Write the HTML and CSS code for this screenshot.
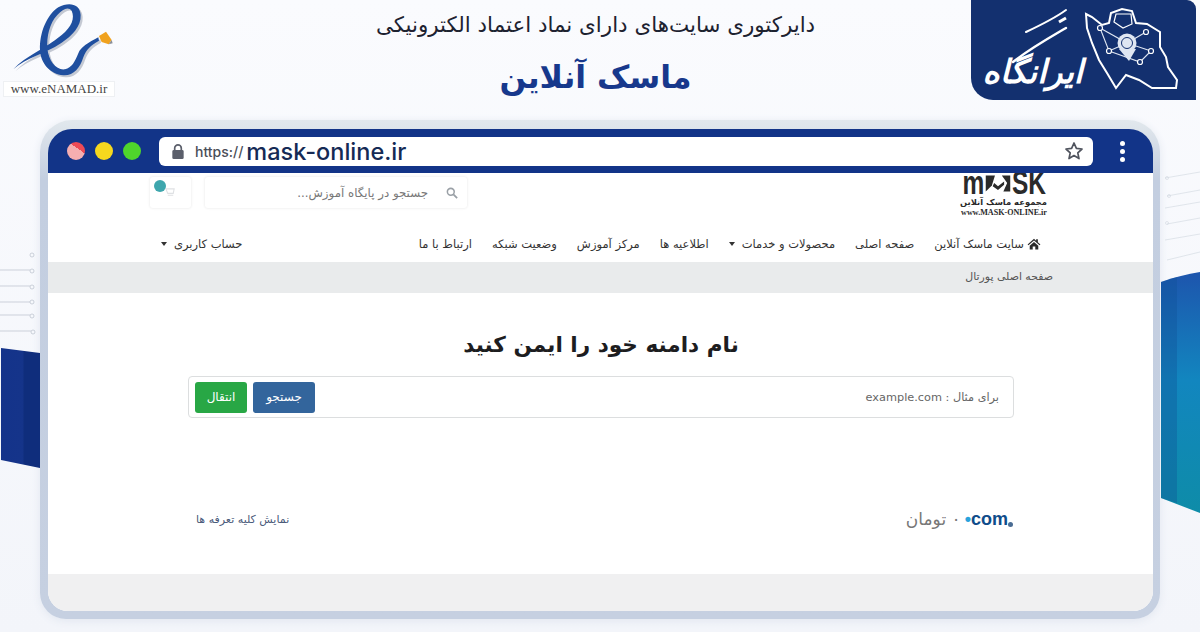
FILE: index.html
```html
<!DOCTYPE html>
<html lang="fa">
<head>
	<meta charset="utf-8">
	<title>ماسک آنلاین</title>
	<link rel="stylesheet" href="styles.css">
</head>
<body>
	<!-- side decoration -->
	<svg class="deco deco-left" viewBox="0 0 40 400" width="40" height="400">
		<defs>
			<linearGradient id="leftBlue" x1="0" x2="1" y1="0" y2="0">
				<stop offset="0" stop-color="#14338a"/>
				<stop offset="0.55" stop-color="#15348a"/>
				<stop offset="0.6" stop-color="#0f2d7c"/>
				<stop offset="1" stop-color="#0f2d7c"/>
			</linearGradient>
		</defs>
		<g fill="none" stroke="#b9c0cb" stroke-width="0.7">
			<path d="M0 20H30M0 36H30M0 52H30M0 65H30M0 81H31"/>
			<circle cx="32" cy="5" r="2"/><circle cx="32" cy="21" r="2"/><circle cx="32" cy="37" r="2"/>
			<circle cx="32" cy="52" r="2"/><circle cx="32" cy="66" r="2"/><circle cx="33" cy="82" r="2"/>
		</g>
		<path d="M1 98 L40 103 V218 L1 210Z" fill="url(#leftBlue)"/>
	</svg>
	<svg class="deco deco-right" viewBox="0 0 39 360" width="39" height="360">
		<defs>
			<linearGradient id="rightBlue" x1="0" x2="0" y1="0" y2="1">
				<stop offset="0" stop-color="#1d55ad"/>
				<stop offset="0.45" stop-color="#1286bf"/>
				<stop offset="1" stop-color="#0e8ca8"/>
			</linearGradient>
		</defs>
		<g fill="none" stroke="#d0d6df" stroke-width="0.6">
			<path d="M4 8L39 2M6 26L39 20M4 38L39 32M6 54L39 48M4 70L39 64M6 90L39 82"/>
			<circle cx="6" cy="8" r="1.5"/><circle cx="8" cy="26" r="1.5"/><circle cx="6" cy="53" r="1.5"/>
		</g>
		<path d="M0 112 C14 107 26 104 39 102 V343 L0 328Z" fill="url(#rightBlue)"/>
		<path d="M0 112 L16 107 V333 L0 328Z" fill="#0d4f96" opacity="0.35"/>
	</svg>

	<header class="top">
		<div class="enamad">
			<svg viewBox="0 0 375 240" width="125" height="80">
				<path transform="translate(6 6)" fill="#c4c9d3" d="M40 208 C80 165 130 150 185 105 C215 80 225 55 215 32 C205 20 190 25 172 45 C148 70 140 110 142 145 C146 185 170 212 195 208 C215 204 225 185 235 160 C243 140 265 128 295 112 L297 122 C272 135 258 150 250 172 C240 205 220 228 190 226 C150 222 122 190 120 150 C118 100 140 45 175 22 C205 5 240 10 242 45 C244 80 215 108 185 128 C130 165 80 170 40 208Z"/>
				<path fill="#1f4f9f" d="M40 208 C80 165 130 150 185 105 C215 80 225 55 215 32 C205 20 190 25 172 45 C148 70 140 110 142 145 C146 185 170 212 195 208 C215 204 225 185 235 160 C243 140 265 128 295 112 L297 122 C272 135 258 150 250 172 C240 205 220 228 190 226 C150 222 122 190 120 150 C118 100 140 45 175 22 C205 5 240 10 242 45 C244 80 215 108 185 128 C130 165 80 170 40 208Z"/>
				<path d="M297 108 L318 95 L335 120 L326 133 L305 126Z" fill="#f0a21e"/>
				<path d="M326 133 L335 120 L338 130Z" fill="#8a8f98"/>
			</svg>
			<div class="enamad-url">www.eNAMAD.ir</div>
		</div>
		<div class="titles">
			<div class="subtitle">دایرکتوری سایت‌های دارای نماد اعتماد الکترونیکی</div>
			<div class="title">ماسک آنلاین</div>
		</div>
		<div class="irangah">
			<svg class="irangah-strokes" viewBox="0 0 120 100" width="120" height="100">
				<path d="M42 62 C60 48 78 38 95 28" fill="none" stroke="#fff" stroke-width="2.4" stroke-linecap="round"/>
				<path d="M55 32 C72 24 84 18 95 10" fill="none" stroke="#fff" stroke-width="2" stroke-linecap="round"/>
				<path d="M88 22 L95 18" stroke="#fff" stroke-width="3"/>
			</svg>
			<span class="irangah-name">ایرانگاه</span>
			<svg class="irangah-map" viewBox="1085 5 96 88" width="96" height="88">
				<path d="M1087 14 L1093 17 L1103 25 L1110 23 L1112 13 L1123 9 L1133 11 L1137 23 L1148 24 L1161 32 L1161 47 L1167 57 L1169 67 L1178 80 L1177 88 L1153 88 L1140 80 L1127 75 L1117 88 L1108 73 L1100 60 L1093 43 L1088 28Z" fill="none" stroke="#fff" stroke-width="2"/>
				<path d="M1115 22 L1117 14 L1132 14 L1133 24 L1124 28Z" fill="none" stroke="#fff" stroke-width="1.2"/>
				<path d="M1101 28 L1128 43 L1147 32 M1101 28 L1110 51 L1128 43 L1152 51 L1141 62 L1110 51" fill="none" stroke="#dfe6f2" stroke-width="1.1"/>
				<g fill="#13306f" stroke="#fff" stroke-width="1.2">
					<circle cx="1101" cy="28" r="2.5"/><circle cx="1147" cy="32" r="2.5"/><circle cx="1110" cy="51" r="2.5"/>
					<circle cx="1152" cy="51" r="2.5"/><circle cx="1141" cy="62" r="2.5"/>
				</g>
				<path d="M1120 49 L1130 61 L1137 49Z" fill="#dfe6f2"/>
				<circle cx="1128" cy="43" r="9.5" fill="#dfe6f2"/>
				<circle cx="1128" cy="43" r="5.5" fill="none" stroke="#13306f" stroke-width="1"/>
			</svg>
		</div>
	</header>

	<div class="stage">
		<div class="browser">
			<div class="toolbar">
				<div class="dots">
					<span class="dot dot-red"></span>
					<span class="dot dot-yellow"></span>
					<span class="dot dot-green"></span>
				</div>
				<div class="address">
					<svg viewBox="0 0 14 18" width="14" height="17">
						<path d="M3.5 8V5.5a3.5 3.5 0 0 1 7 0V8" fill="none" stroke="#5b5f6b" stroke-width="1.8"/>
						<rect x="1" y="7.5" width="12" height="9.5" rx="1.5" fill="#5b5f6b"/>
					</svg>
					<span class="scheme">https://</span><span class="domain">mask-online.ir</span>
					<svg class="star" viewBox="0 0 20 20" width="20" height="20">
						<path d="M10 2 L12.4 7.4 L18 8 L13.8 11.8 L15 17.6 L10 14.6 L5 17.6 L6.2 11.8 L2 8 L7.6 7.4Z" fill="none" stroke="#50545e" stroke-width="1.7" stroke-linejoin="round"/>
					</svg>
				</div>
				<div class="kebab"><i></i><i></i><i></i></div>
			</div>

			<div class="site" dir="rtl">
				<div class="site-top wrap">
					<div class="mask-logo">
						<div class="mask-word">
							<span>m</span>
							<svg viewBox="0 0 34 21" width="26" height="21">
								<path d="M1 0H13L9 13L1 21Z" fill="#2a2a2a"/>
								<path d="M22 0H33V21H24L29 10Z" fill="#2a2a2a"/>
								<path d="M12 10L17 14L25 8V12L17 19L10 14Z" fill="#2a2a2a"/>
							</svg>
							<span>SK</span>
						</div>
						<div class="mask-fa">مجموعه ماسک آنلاین</div>
						<div class="mask-url">www.MASK-ONLINE.ir</div>
					</div>
					<div class="site-tools">
						<div class="search">
							<svg viewBox="0 0 14 14" width="12" height="12">
								<circle cx="5.6" cy="5.6" r="4" fill="none" stroke="#9aa0a6" stroke-width="1.8"/>
								<path d="M8.6 8.6L13 13" stroke="#9aa0a6" stroke-width="2"/>
							</svg>
							<span>جستجو در پایگاه آموزش...</span>
						</div>
						<div class="cart">
							<span class="cart-badge"></span>
							<svg viewBox="0 0 12 12" width="11" height="11">
								<path d="M1 2H10L9 7H3Z M3 9H9" fill="none" stroke="#dfe1e4" stroke-width="1.2"/>
							</svg>
						</div>
					</div>
				</div>

				<nav class="nav wrap">
					<div class="nav-links">
						<a class="nav-link nav-home">
							<svg viewBox="0 0 16 14" width="14" height="12">
								<path d="M8 1L0.5 7.5L1.5 8.6L8 3L14.5 8.6L15.5 7.5L12.5 5V1.5H10.5V3.2Z" fill="#2b2b2b"/>
								<path d="M3 9L8 4.6L13 9V13.5H9.5V10H6.5V13.5H3Z" fill="#2b2b2b"/>
							</svg>
							سایت ماسک آنلاین
						</a>
						<a class="nav-link">صفحه اصلی</a>
						<a class="nav-link caret">محصولات و خدمات</a>
						<a class="nav-link">اطلاعیه ها</a>
						<a class="nav-link">مرکز آموزش</a>
						<a class="nav-link">وضعیت شبکه</a>
						<a class="nav-link">ارتباط با ما</a>
					</div>
					<a class="nav-link caret">حساب کاربری</a>
				</nav>

				<div class="crumb">
					<div class="wrap crumb-text">صفحه اصلی پورتال</div>
				</div>

				<main class="domain-box">
					<h1 class="domain-title">نام دامنه خود را ایمن کنید</h1>
					<div class="domain-form">
						<span class="domain-hint">برای مثال : example.com</span>
						<div class="domain-btns">
							<button class="btn btn-blue">جستجو</button>
							<button class="btn btn-green">انتقال</button>
						</div>
					</div>
					<div class="price-row">
						<div class="price">
							<span class="com"><b>•</b>com<i></i></span>
							<span class="price-val">۰ تومان</span>
						</div>
						<a class="all-tariffs">نمایش کلیه تعرفه ها</a>
					</div>
				</main>

				<div class="site-foot"></div>
			</div>
		</div>
	</div>
</body>
</html>
```

FILE: styles.css
```css
html, body {
	margin: 0;
	height: 632px;
	overflow: hidden;
}
body {
	background: linear-gradient(#fafbfe, #f3f5fa);
	font-family: "DejaVu Sans", "Noto Sans", sans-serif;
	color: #444;
	position: relative;
}

.deco {
	position: absolute;
}
.deco-left {
	left: 0;
	top: 250px;
}
.deco-right {
	right: 0;
	top: 170px;
}

/* top strip */
.top {
	height: 120px;
	display: flex;
	align-items: flex-start;
}
.enamad {
	width: 125px;
	flex: none;
}
.enamad svg {
	display: block;
}
.enamad-url {
	margin: 1px 0 0 3px;
	width: 112px;
	height: 16px;
	box-sizing: border-box;
	background: #fff;
	border: 1px solid #eef0f3;
	font: 13px/14px "Liberation Serif", serif;
	color: #444;
	text-align: center;
}
.titles {
	flex: 1;
	text-align: center;
	direction: rtl;
	padding: 10px 0 0 95px;
}
.subtitle {
	font-size: 21.4px;
	line-height: 30px;
	color: #1d2230;
}
.title {
	margin-top: 13px;
	font-size: 31.5px;
	line-height: 48px;
	font-weight: bold;
	color: #17388c;
}
.irangah {
	width: 225px;
	height: 100px;
	margin-right: 4px;
	flex: none;
	background: #13306f;
	border-radius: 0 9px 0 22px;
	display: flex;
	align-items: flex-end;
	justify-content: flex-end;
	padding-right: 16px;
	box-sizing: border-box;
	color: #fff;
	position: relative;
}
.irangah-strokes {
	position: absolute;
	left: 0;
	top: 0;
}
.irangah-name {
	font-size: 33px;
	line-height: 44px;
	font-weight: bold;
	font-style: italic;
	direction: rtl;
	padding-bottom: 6px;
	margin-right: 1px;
}
.irangah-map {
	margin-bottom: 7px;
}

/* browser frame */
.stage {
	padding: 0 40px;
}
.browser {
	height: 499px;
	box-sizing: border-box;
	padding: 9px 7px 8px 8px;
	background: linear-gradient(#e2e8ed, #c3cee0 12%, #c6d0e1);
	border-radius: 32px 32px 26px 26px;
	box-shadow: 0 2px 8px #e2e7f0;
	display: flex;
	flex-direction: column;
}
.toolbar {
	height: 44px;
	flex: none;
	background: #123488;
	border-radius: 24px 24px 0 0;
	display: flex;
	align-items: center;
	box-sizing: border-box;
	padding: 0 28px 0 19px;
}
.dots {
	display: flex;
	gap: 10px;
	margin-right: 18px;
}
.dot {
	width: 18px;
	height: 18px;
	border-radius: 50%;
}
.dot-red {
	background: linear-gradient(35deg, #f5aeb0 62%, #ee4a55 62%);
}
.dot-yellow {
	background: #f6d81e;
}
.dot-green {
	background: #4fd52c;
}
.address {
	flex: 1;
	height: 29px;
	background: #fff;
	border-radius: 6px;
	display: flex;
	align-items: center;
	padding: 0 9px 0 12px;
}
.scheme {
	margin-left: 10px;
	margin-right: 3px;
	font: 500 14px "Inter", sans-serif;
	color: #4a4e58;
}
.domain {
	font: 500 23.5px "Inter", sans-serif;
	color: #152a55;
}
.star {
	margin-left: auto;
}
.kebab {
	margin-left: 27px;
	display: flex;
	flex-direction: column;
	gap: 3px;
}
.kebab i {
	width: 5px;
	height: 5px;
	border-radius: 50%;
	background: #fff;
}

/* site inside the frame */
.site {
	flex: 1;
	background: #fff;
	border-radius: 0 0 20px 20px;
	overflow: hidden;
	display: flex;
	flex-direction: column;
}
.wrap {
	padding: 0 100px;
}
.site-top {
	height: 51px;
	flex: none;
	display: flex;
	justify-content: space-between;
	align-items: flex-start;
	padding-left: 102px;
}
.mask-logo {
	width: 86px;
	margin-right: 6px;
	color: #2a2a2a;
	text-align: center;
}
.mask-word {
	height: 21px;
	overflow: hidden;
	display: flex;
	justify-content: center;
	direction: ltr;
	font: bold 34px/19px "Liberation Sans", sans-serif;
}
.mask-word span {
	width: 23px;
	transform: scaleX(0.72);
	display: flex;
	justify-content: center;
}
.mask-word span + svg + span {
	width: 36px;
}
.mask-fa {
	margin-top: 3px;
	font-size: 8.4px;
	line-height: 11px;
	font-weight: bold;
	white-space: nowrap;
}
.mask-url {
	direction: ltr;
	font: bold 8.1px/9px "Liberation Serif", serif;
	white-space: nowrap;
}
.site-tools {
	display: flex;
	gap: 14px;
	padding-top: 4px;
}
.search {
	width: 262px;
	height: 31px;
	box-sizing: border-box;
	display: flex;
	align-items: center;
	gap: 18px;
	padding: 0 9px;
	border-radius: 3px;
	box-shadow: 0 0 3px #e4e4e4;
	font-size: 11.8px;
	color: #777;
}
.cart {
	width: 41px;
	height: 31px;
	border-radius: 3px;
	box-shadow: 0 0 3px #e4e4e4;
	display: flex;
	align-items: center;
	justify-content: center;
	position: relative;
}
.cart-badge {
	position: absolute;
	left: 4px;
	top: 3px;
	width: 12px;
	height: 12px;
	border-radius: 50%;
	background: #3ea6ad;
}
.nav {
	height: 38px;
	box-sizing: border-box;
	padding-top: 2px;
	flex: none;
	display: flex;
	justify-content: space-between;
	align-items: center;
	font-size: 11.5px;
	color: #333;
	padding-right: 112px;
	padding-left: 113px;
}
.nav-links {
	display: flex;
	gap: 20px;
}
.nav-link {
	display: flex;
	align-items: center;
	gap: 3px;
	white-space: nowrap;
}
.caret::after {
	content: "";
	margin-right: 4px;
	border: 3.5px solid transparent;
	border-top: 4px solid #333;
	border-bottom: 0;
}
.crumb {
	height: 31px;
	flex: none;
	background: #e9ebec;
	font-size: 10.9px;
	line-height: 29px;
	color: #555;
}
.domain-box {
	flex: 1;
	padding: 0 139px 0 140px;
}
.domain-title {
	margin: 35px 0 14px;
	text-align: center;
	font-size: 21.6px;
	line-height: 34px;
	font-weight: bold;
	color: #1d1d1f;
}
.domain-form {
	height: 42px;
	box-sizing: border-box;
	border: 1px solid #dcdedf;
	border-radius: 4px;
	display: flex;
	justify-content: space-between;
	align-items: center;
	padding: 0 14px 0 6px;
	font-size: 11.3px;
	color: #666;
}
.domain-btns {
	display: flex;
	gap: 6px;
}
.btn {
	height: 31px;
	border: 0;
	border-radius: 3px;
	color: #fff;
	font-family: inherit;
	font-size: 12px;
	padding: 0;
}
.btn-blue {
	width: 62px;
	background: #33659c;
}
.btn-green {
	width: 52px;
	background: #28a745;
}
.price-row {
	margin-top: 91px;
	display: flex;
	justify-content: space-between;
	align-items: center;
	padding: 0 6px 0 8px;
}
.price {
	display: flex;
	align-items: center;
	gap: 4px;
	color: #777;
	font-size: 17px;
}
.com {
	direction: ltr;
	font: bold 18px/16px "Liberation Sans", sans-serif;
	color: #0f4c8a;
	display: flex;
	align-items: center;
	position: relative;
}
.com b {
	color: #29a3dc;
}
.com i {
	position: absolute;
	right: -5px;
	bottom: 0;
	width: 5px;
	height: 5px;
	border-radius: 50%;
	background: #4a6c93;
}
.all-tariffs {
	font-size: 11px;
	color: #4a5a7a;
}
.site-foot {
	height: 37px;
	flex: none;
	background: #f0f0f1;
}
```
